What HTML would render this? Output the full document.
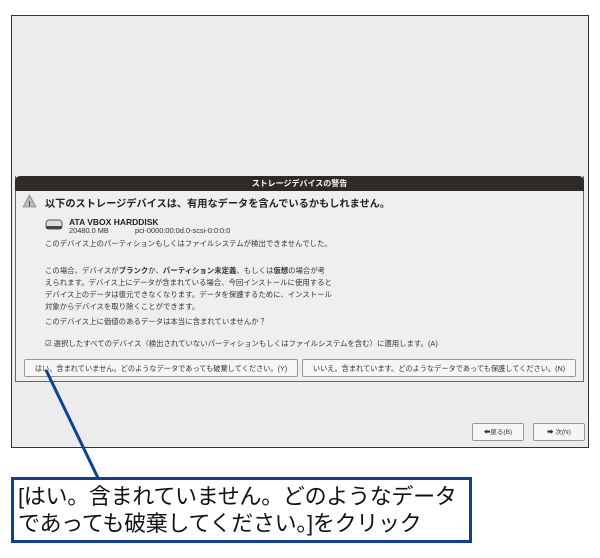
<!DOCTYPE html>
<html><head><meta charset="utf-8"><style>
*{margin:0;padding:0;box-sizing:border-box}
body{width:600px;height:558px;background:#fff;position:relative;overflow:hidden;font-family:"Liberation Sans","Noto Sans CJK JP",sans-serif;color:#222}
.abs{position:absolute}
.screen{left:11px;top:15px;width:578px;height:433px;border:1px solid #333;background:#ececec}
.dlg{left:15px;top:176px;width:569px;height:206px;border:1px solid #666;border-top:none;background:#efefef}
.title{left:15px;top:176px;width:569px;height:15px;background:#2e2a28;border-radius:5px 5px 0 0;color:#fff;font-size:8px;font-weight:bold;text-align:center;line-height:15px}
.t{font-size:7.4px;white-space:nowrap;color:#333;line-height:12px}
.btn{border:1px solid #999;background:#f6f6f6;border-radius:2px;font-size:7.2px;line-height:17px;text-align:center;white-space:nowrap;color:#333}
.callout{left:11px;top:477px;width:461px;height:66px;border:3px solid #0d3f95;background:#fff;font-size:22px;line-height:27px;padding:3px 0 0 4px;color:#111;white-space:nowrap;letter-spacing:-0.3px}
</style></head><body>
<div class="abs screen"></div>
<div class="abs dlg"></div>
<div class="abs title">ストレージデバイスの警告</div>
<svg class="abs" style="left:22px;top:194px" width="15" height="14" viewBox="0 0 15 14"><path d="M7.5 1 L14 13 L1 13 Z" fill="#bbb" stroke="#888" stroke-width="0.8"/><text x="7.5" y="12" font-size="7" font-weight="bold" text-anchor="middle" fill="#333" font-family="Liberation Sans">!</text></svg>
<div class="abs" style="left:45px;top:195px;font-size:10.2px;font-weight:bold;white-space:nowrap;color:#222">以下のストレージデバイスは、有用なデータを含んでいるかもしれません。</div>
<svg class="abs" style="left:45px;top:219px" width="18" height="12" viewBox="0 0 18 12"><rect x="1" y="1" width="16" height="9" rx="3" fill="#ddd" stroke="#555"/><rect x="1" y="7" width="16" height="3" rx="1" fill="#444"/></svg>
<div class="abs" style="left:69px;top:217px;font-size:8.5px;font-weight:bold;color:#222">ATA VBOX HARDDISK</div>
<div class="abs t" style="left:69px;top:225px">20480.0 MB</div>
<div class="abs t" style="left:135px;top:225px">pci-0000:00:0d.0-scsi-0:0:0:0</div>
<div class="abs t" style="left:45px;top:238px">このデバイス上のパーティションもしくはファイルシステムが検出できませんでした。</div>
<div class="abs t" style="left:45px;top:265px">この場合、デバイスが<b>ブランク</b>か、<b>パーティション未定義</b>、もしくは<b>仮想</b>の場合が考<br>えられます。デバイス上にデータが含まれている場合、今回インストールに使用すると<br>デバイス上のデータは復元できなくなります。データを保護するために、インストール<br>対象からデバイスを取り除くことができます。</div>
<div class="abs t" style="left:45px;top:316px">このデバイス上に価値のあるデータは本当に含まれていませんか？</div>
<div class="abs t" style="left:45px;top:338px">☑ 選択したすべてのデバイス（検出されていないパーティションもしくはファイルシステムを含む）に適用します。(A)</div>
<div class="abs btn" style="left:24px;top:359px;width:274px;height:18px">はい。含まれていません。どのようなデータであっても破棄してください。(Y)</div>
<div class="abs btn" style="left:302px;top:359px;width:274px;height:18px">いいえ。含まれています。どのようなデータであっても保護してください。(N)</div>
<div class="abs btn" style="left:472px;top:423px;width:52px;height:18px;font-size:6.5px">⬅戻る(B)</div>
<div class="abs btn" style="left:533px;top:423px;width:52px;height:18px;font-size:6.5px">➡ 次(N)</div>
<svg class="abs" style="left:0;top:0" width="600" height="558"><line x1="46" y1="370" x2="98" y2="478" stroke="#0d3f95" stroke-width="3"/></svg>
<div class="abs callout">[はい。含まれていません。どのようなデータ<br>であっても破棄してください。]をクリック</div>
</body></html>
